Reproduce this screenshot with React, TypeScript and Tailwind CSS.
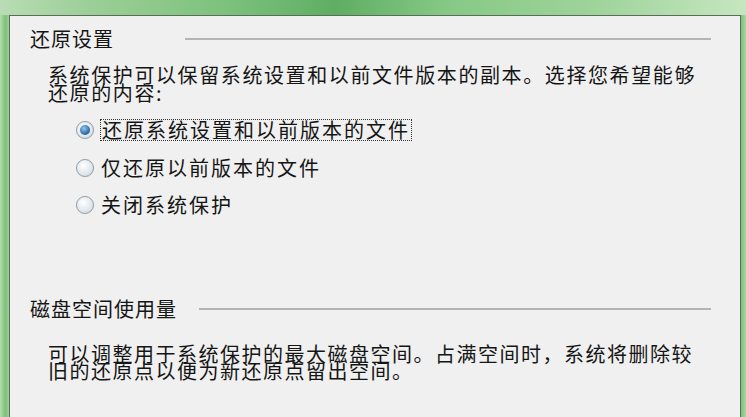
import React from 'react'

function Radio({ checked }: { checked?: boolean }) {
  return (
    <span className="relative flex h-[18px] w-[18px] shrink-0 items-center justify-center rounded-full border border-[#949ea8] bg-[radial-gradient(circle_at_40%_35%,#ffffff,#dde4ea_65%,#c3ccd4)] shadow-[0_0_1px_#cfd6dc]">
      {checked && (
        <span className="block h-[10px] w-[10px] rounded-full bg-[radial-gradient(circle_at_40%_35%,#94c8f0,#2f6fa8_60%,#173e66)]" />
      )}
    </span>
  )
}

function GroupTitle({ text, gap }: { text: string; gap: string }) {
  return (
    <div className="flex items-center">
      <span className="text-[20px] leading-[22px] tracking-[1px]">{text}</span>
      <span className={`h-[2px] flex-1 bg-[#b4b4b4] mr-[29px] ${gap}`} />
    </div>
  )
}

export default function App() {
  return (
    <div
      className="flex h-[417px] w-[746px] flex-col overflow-hidden bg-[#8fcf8c] text-[#151515]"
      style={{ fontFamily: '"Noto Sans CJK SC", "Noto Sans", sans-serif' }}
    >
      {/* window chrome */}
      <div className="h-[15px] shrink-0 bg-[linear-gradient(90deg,#b9dcb4_0%,#9ccf97_12%,#7dc27d_30%,#5fae62_45%,#86c985_60%,#9fd49b_80%,#c6e6c0_100%)]" />
      <div className="flex flex-1">
        <div className="w-[9px] shrink-0 bg-[linear-gradient(90deg,#b5dcaf,#7cc27a_60%,#9ccf96)]" />
        <div className="flex-1 border-l border-t border-r border-[#5e6a5e] bg-[#f0f0f0] pl-[20px] pt-[12px]">
          {/* 还原设置 */}
          <GroupTitle text="还原设置" gap="ml-[71px]" />
          <p className="ml-[18px] mt-[16px] text-[20px] leading-[18px] tracking-[1.6px]">
            系统保护可以保留系统设置和以前文件版本的副本。选择您希望能够
            <br />
            还原的内容:
          </p>
          <div className="ml-[46px] mt-[17px] flex flex-col gap-[17px]">
            <label className="flex items-center gap-[6px]">
              <Radio checked />
              <span className="border border-dotted border-[#333] px-[1px] text-[20px] leading-[20px] tracking-[2px]">
                还原系统设置和以前版本的文件
              </span>
            </label>
            <label className="flex items-center gap-[7px]">
              <Radio />
              <span className="text-[20px] leading-[20px] tracking-[2px]">仅还原以前版本的文件</span>
            </label>
            <label className="flex items-center gap-[7px]">
              <Radio />
              <span className="text-[20px] leading-[20px] tracking-[2px]">关闭系统保护</span>
            </label>
          </div>

          {/* 磁盘空间使用量 */}
          <div className="mt-[83px]">
            <GroupTitle text="磁盘空间使用量" gap="ml-[22px]" />
          </div>
          <p className="ml-[18px] mt-[25px] text-[20px] leading-[17px] tracking-[1.5px]">
            可以调整用于系统保护的最大磁盘空间。占满空间时，系统将删除较
            <br />
            旧的还原点以便为新还原点留出空间。
          </p>
        </div>
        <div className="w-[5px] shrink-0 bg-[linear-gradient(90deg,#7cc27a,#a6d8a0)]" />
      </div>
    </div>
  )
}
